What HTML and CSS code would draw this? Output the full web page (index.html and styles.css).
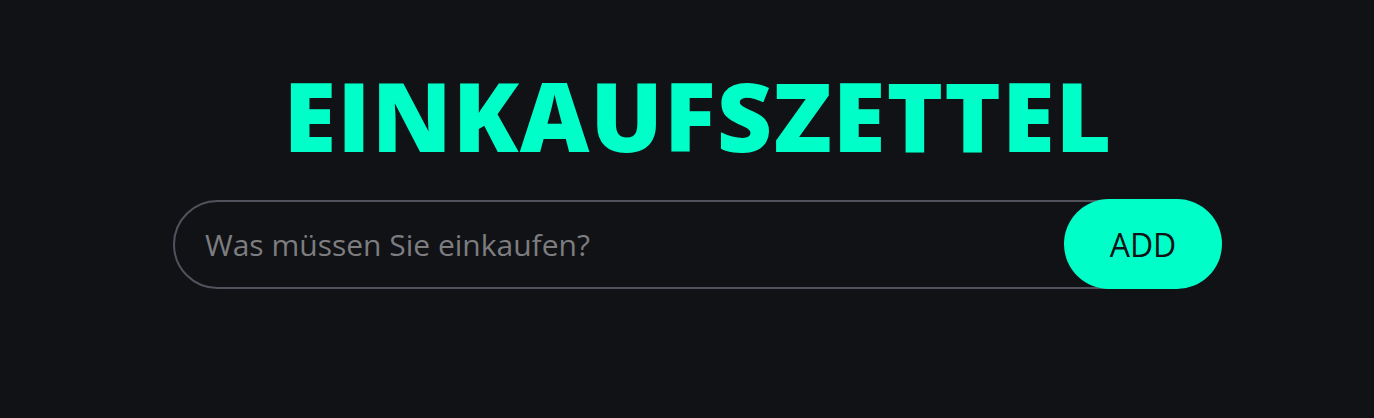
FILE: index.html
```html
<!DOCTYPE html>
<html lang="de">
<head>
<meta charset="utf-8">
<title>Einkaufszettel</title>
<link rel="stylesheet" href="styles.css">
</head>
<body>
<main class="app">
  <h1 class="title">EINKAUFSZETTEL</h1>
  <form class="add-form">
    <input class="add-input" type="text" placeholder="Was müssen Sie einkaufen?">
    <button class="add-btn" type="button">ADD</button>
  </form>
</main>
</body>
</html>
```
FILE: styles.css
```css
* { box-sizing: border-box; }
html, body { margin: 0; height: 100%; }
body {
  background: #111216;
  font-family: "Open Sans", "Noto Sans", sans-serif;
}
.app {
  display: flex;
  flex-direction: column;
  align-items: center;
  padding: 55px 0 0 21px;
}
.title {
  margin: 0 0 0 1px;
  color: #00ffc8;
  font-family: "Open Sans", sans-serif;
  font-weight: 800;
  font-size: 96px;
  line-height: 120px;
  letter-spacing: 1px;
}
.add-form {
  display: flex;
  align-items: center;
  width: 1049px;
  margin-top: 24px;
}
.add-input {
  flex: 1;
  height: 89px;
  border: 2px solid #52525c;
  border-radius: 45px;
  background: transparent;
  padding: 0 30px;
  font-family: "Open Sans", sans-serif;
  font-size: 30px;
  color: #e0e0e0;
  outline: none;
}
.add-input::placeholder { color: #7d7d80; }
.add-btn {
  width: 158px;
  height: 90px;
  margin-left: -102px;
  border: none;
  border-radius: 45px;
  background: #00ffc8;
  color: #111216;
  font-family: "Open Sans", sans-serif;
  font-weight: 500;
  font-size: 32px;
  padding: 0;
  cursor: pointer;
}
```
